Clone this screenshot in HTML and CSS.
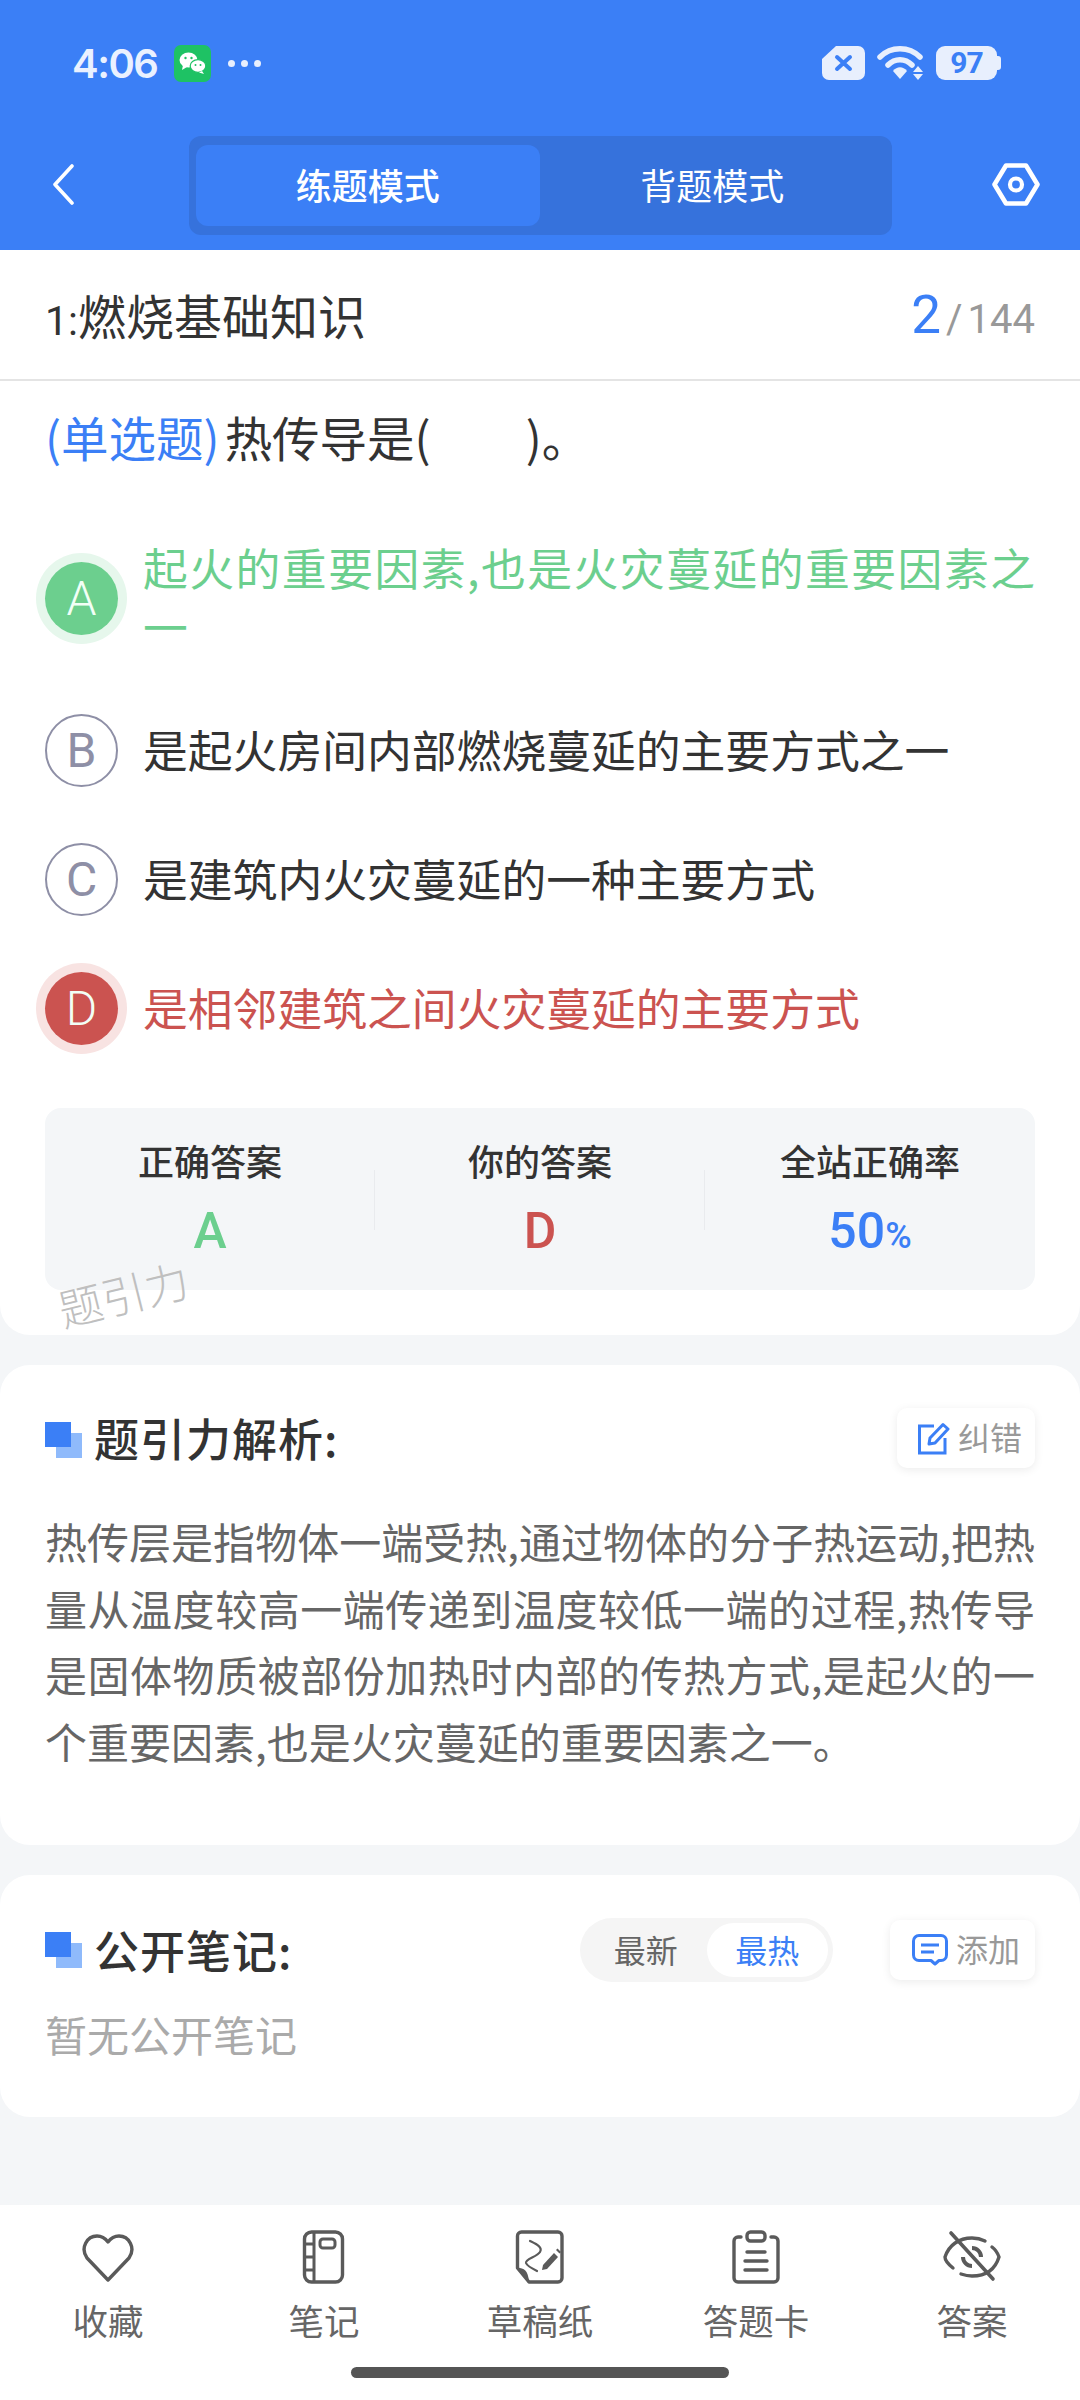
FILE: index.html
```html
<!DOCTYPE html>
<html lang="zh">
<head>
  <meta charset="utf-8">
  <title>题引力</title>
  <link rel="stylesheet" href="styles.css">
</head>
<body>
  <div class="page">
    <header class="header">
      <div class="status">
        <div class="status-left">
          <span class="time">4:06</span>
          <span class="wechat">
            <svg width="37" height="37" viewBox="0 0 37 37">
              <rect width="37" height="37" rx="7" fill="#1ec264"/>
              <ellipse cx="14.5" cy="15" rx="9" ry="7.6" fill="#fff"/>
              <path d="M9 20l-1 5 5-3z" fill="#fff"/>
              <ellipse cx="24" cy="21" rx="7.8" ry="6.4" fill="#fff" stroke="#1ec264" stroke-width="1.2"/>
              <path d="M28 26l2 3-5-1.500z" fill="#fff"/>
              <circle cx="11.500" cy="13" r="1.200" fill="#1ec264"/>
              <circle cx="17.500" cy="13" r="1.200" fill="#1ec264"/>
              <circle cx="21.500" cy="20" r="1" fill="#1ec264"/>
              <circle cx="26.500" cy="20" r="1" fill="#1ec264"/>
            </svg>
          </span>
          <span class="dots"><i></i><i></i><i></i></span>
        </div>
        <div class="status-right">
          <svg width="43" height="34" viewBox="0 0 43 34">
            <path d="M14 0H36a7 7 0 0 1 7 7V27a7 7 0 0 1-7 7H7a7 7 0 0 1-7-7V13z" fill="#e8effd"/>
            <path d="M15 11l13 12M28 11L15 23" stroke="#3b7ff6" stroke-width="4" stroke-linecap="round"/>
          </svg>
          <svg class="wifi" width="47" height="34" viewBox="0 0 47 34">
            <path d="M3 11C14 0 32 0 43 11" fill="none" stroke="#e8effd" stroke-width="5.500" stroke-linecap="round"/>
            <path d="M11 19C18 12 28 12 35 19" fill="none" stroke="#e8effd" stroke-width="5.500" stroke-linecap="round"/>
            <path d="M16 25C20 20 26 20 30 25L23 33z" fill="#e8effd"/>
            <path d="M41 20l5 6H36zM36 28h10l-5 6z" fill="#e8effd"/>
          </svg>
          <span class="battery">97</span>
        </div>
      </div>
      <div class="toolbar">
        <svg width="22" height="41" viewBox="0 0 22 41">
          <path d="M20 2L3 20.500 20 39" fill="none" stroke="#fff" stroke-width="3.600" stroke-linecap="round" stroke-linejoin="round"/>
        </svg>
        <div class="tabs">
          <span class="tab tab-active">练题模式</span>
          <span class="tab">背题模式</span>
        </div>
        <svg width="48" height="43" viewBox="0 0 48 43">
          <path d="M14 2.500H34L45.500 21.500 34 40.500H14L2.500 21.500z" fill="none" stroke="#fff" stroke-width="4.600" stroke-linejoin="round"/>
          <circle cx="24" cy="21.500" r="6" fill="none" stroke="#fff" stroke-width="4.200"/>
        </svg>
      </div>
    </header>

    <section class="card question-card">
      <div class="title-row">
        <span class="chapter"><span class="chapter-no">1:</span>燃烧基础知识</span>
        <span class="progress"><b>2</b><em>/</em>144</span>
      </div>
      <p class="question"><span class="qtype">(单选题)</span>热传导是(&emsp;&emsp;)。</p>

      <ul class="options">
        <li class="option right"><span class="letter">A</span><span class="option-text">起火的重要因素,也是火灾蔓延的重要因素之一</span></li>
        <li class="option"><span class="letter">B</span><span class="option-text">是起火房间内部燃烧蔓延的主要方式之一</span></li>
        <li class="option"><span class="letter">C</span><span class="option-text">是建筑内火灾蔓延的一种主要方式</span></li>
        <li class="option wrong"><span class="letter">D</span><span class="option-text">是相邻建筑之间火灾蔓延的主要方式</span></li>
      </ul>

      <div class="stats">
        <div class="stat"><span class="stat-label">正确答案</span><span class="stat-value green">A</span></div>
        <div class="stat"><span class="stat-label">你的答案</span><span class="stat-value red">D</span></div>
        <div class="stat"><span class="stat-label">全站正确率</span><span class="stat-value blue">50<small>%</small></span></div>
      </div>
      <span class="watermark">题引力</span>
    </section>

    <section class="card analysis-card">
      <div class="section-head">
        <span class="mark"></span>
        <h3>题引力解析:</h3>
        <span class="chip">
          <svg width="33" height="33" viewBox="0 0 33 33">
            <path d="M17 4H2.500V31H28V16" fill="none" stroke="#3b7ff6" stroke-width="3"/>
            <path d="M12 22l1-6L26 2.500l5 4.500L18 21z" fill="none" stroke="#3b7ff6" stroke-width="3" stroke-linejoin="round"/>
          </svg>
          <span class="chip-text">纠错</span>
        </span>
      </div>
      <p class="analysis">热传层是指物体一端受热,通过物体的分子热运动,把热量从温度较高一端传递到温度较低一端的过程,热传导是固体物质被部份加热时内部的传热方式,是起火的一个重要因素,也是火灾蔓延的重要因素之一。</p>
    </section>

    <section class="card notes-card">
      <div class="section-head">
        <span class="mark"></span>
        <h3>公开笔记:</h3>
        <span class="sort">
          <span class="sort-item">最新</span>
          <span class="sort-item sort-active">最热</span>
        </span>
        <span class="chip chip-add">
          <svg width="36" height="32" viewBox="0 0 36 32">
            <path d="M7 1.500H29a5.500 5.500 0 0 1 5.500 5.500V21a5.500 5.500 0 0 1-5.500 5.500H27L23 30 19 26.500H7A5.500 5.500 0 0 1 1.500 21V7A5.500 5.500 0 0 1 7 1.500z" fill="none" stroke="#3b7ff6" stroke-width="3" stroke-linejoin="round"/>
            <path d="M9 11H27M9 18H22" stroke="#3b7ff6" stroke-width="3"/>
          </svg>
          <span class="chip-text">添加</span>
        </span>
      </div>
      <p class="empty">暂无公开笔记</p>
    </section>

    <nav class="bottom">
      <div class="nav-items">
        <div class="nav-item">
          <svg width="54" height="54" viewBox="0 0 54 54">
            <path d="M27 50L6 28C-1 18 6 6 16 6C20.500 6 24 8 27 12C30 8 33.500 6 38 6C48 6 55 18 48 28z" fill="none" stroke="#5a5a5a" stroke-width="3.400" stroke-linejoin="round"/>
          </svg>
          <span>收藏</span>
        </div>
        <div class="nav-item">
          <svg width="54" height="54" viewBox="0 0 54 54">
            <rect x="7.500" y="2" width="38" height="50" rx="7" fill="none" stroke="#5a5a5a" stroke-width="3.400"/>
            <path d="M17 2V52M7.500 14H17M7.500 27H17M7.500 40H17" fill="none" stroke="#5a5a5a" stroke-width="3"/>
            <rect x="23" y="9" width="15" height="9" rx="3" fill="none" stroke="#5a5a5a" stroke-width="3"/>
          </svg>
          <span>笔记</span>
        </div>
        <div class="nav-item">
          <svg width="54" height="54" viewBox="0 0 54 54">
            <path d="M4.500 38V6a4 4 0 0 1 4-4H45a4 4 0 0 1 4 4V48a4 4 0 0 1-4 4H16z" fill="none" stroke="#5a5a5a" stroke-width="3.400" stroke-linejoin="round"/>
            <path d="M4.500 38C11 38 15 40 16 52z" fill="#5a5a5a"/>
            <path d="M17 11C23 14 30 17 27 22C24 27 12 29 13 33C14 36 20 39 24 41" fill="none" stroke="#5a5a5a" stroke-width="2.200" stroke-linecap="round"/>
            <path d="M29 40l1-5 11-12 4 4-11 12z" fill="#5a5a5a"/>
            <path d="M43 20l1.500-1.500 3.500 3.500-1.500 1.500z" fill="#5a5a5a"/>
          </svg>
          <span>草稿纸</span>
        </div>
        <div class="nav-item">
          <svg width="54" height="54" viewBox="0 0 54 54">
            <path d="M12 7H9a4 4 0 0 0-4 4V48a4 4 0 0 0 4 4H45a4 4 0 0 0 4-4V11a4 4 0 0 0-4-4H42" fill="none" stroke="#5a5a5a" stroke-width="3.400" stroke-linecap="round"/>
            <rect x="18" y="2" width="18" height="9" rx="3.500" fill="none" stroke="#5a5a5a" stroke-width="3.400"/>
            <path d="M18 22H36M16 31H38M16 40H38" stroke="#5a5a5a" stroke-width="3.400" stroke-linecap="round"/>
          </svg>
          <span>答题卡</span>
        </div>
        <div class="nav-item">
          <svg width="58" height="54" viewBox="0 0 58 54">
            <path d="M10 38C5 34 2 30 2 27C6 15 16 8 29 8C34 8 38 9 42 11M49 17C53 20 55 24 56 27C52 40 42 46 29 46C25 46 21 45 18 44" fill="none" stroke="#5a5a5a" stroke-width="3.400" stroke-linecap="round"/>
            <path d="M29 18a9 9 0 0 1 9 9M20 27a9 9 0 0 0 9 9" fill="none" stroke="#5a5a5a" stroke-width="4"/>
            <path d="M8 3L50 49" stroke="#5a5a5a" stroke-width="3.600" stroke-linecap="round"/>
          </svg>
          <span>答案</span>
        </div>
      </div>
      <div class="home-bar"></div>
    </nav>
  </div>
</body>
</html>
```

FILE: styles.css
```css
* {
    box-sizing: border-box;
}

html,
body {
    margin: 0;
    padding: 0;
}

body {
    width: 1080px;
    height: 2400px;
    background-color: #f4f6f8;
    font-family: "Noto Sans CJK SC", "Noto Sans", sans-serif;
    color: #333;
}

.page {
    display: flex;
    flex-direction: column;
    height: 2400px;
    overflow: hidden;
}

/* header */
.header {
    height: 250px;
    background-color: #3b7ff6;
}

.status {
    display: flex;
    justify-content: space-between;
    align-items: center;
    height: 126px;
    padding: 0 83px 0 72px;
}

.status-left,
.status-right {
    display: flex;
    align-items: center;
}

.time {
    width: 102px;
    font-family: Inter, sans-serif;
    font-size: 40px;
    font-weight: 600;
    letter-spacing: -1.500px;
    color: #eaf1ff;
}

.wechat {
    display: flex;
    height: 37px;
}

.dots {
    display: flex;
    gap: 6px;
    margin-left: 17px;
}

.dots i {
    width: 7px;
    height: 7px;
    border-radius: 50%;
    background-color: #e8effd;
}

.wifi {
    margin: 0 12px;
}

.battery {
    position: relative;
    width: 61px;
    height: 34px;
    border-radius: 9px;
    background-color: #e8effd;
    color: #3b7ff6;
    font-family: Roboto, sans-serif;
    font-size: 30px;
    font-weight: 700;
    letter-spacing: -1px;
    line-height: 34px;
    text-align: center;
}

.battery::after {
    content: "";
    position: absolute;
    right: -4px;
    top: 10px;
    width: 4px;
    height: 14px;
    border-radius: 0 3px 3px 0;
    background-color: #e8effd;
}

.toolbar {
    display: flex;
    justify-content: space-between;
    align-items: center;
    height: 104px;
    padding: 0 40px 8px 52px;
    margin-top: 10px;
}

.tabs {
    display: flex;
    width: 703px;
    height: 99px;
    padding: 9px 7px;
    margin-top: 3px;
    margin-left: 14px;
    border-radius: 12px;
    background-color: #3672dc;
}

.tab {
    width: 345px;
    border-radius: 12px;
    color: #fff;
    font-size: 36px;
    line-height: 79px;
    text-align: center;
}

.tab-active {
    background-color: #3b7ff6;
    font-weight: 500;
}

/* cards */
.card {
    position: relative;
    background-color: #fff;
}

.question-card {
    height: 1085px;
    border-radius: 0 0 30px 30px;
}

.analysis-card {
    height: 480px;
    margin-top: 30px;
    padding: 43px 45px 0;
    border-radius: 30px;
}

.notes-card {
    height: 242px;
    margin-top: 30px;
    padding: 45px 45px 0;
    border-radius: 30px;
}

.title-row {
    display: flex;
    justify-content: space-between;
    align-items: center;
    height: 131px;
    padding: 0 45px;
    border-bottom: 2px solid #e4e4e4;
}

.chapter {
    font-size: 48px;
    margin-top: -2px;
}

.chapter-no {
    font-family: Roboto, sans-serif;
    font-size: 41px;
}

.progress {
    display: flex;
    align-items: baseline;
    color: #999;
    font-family: Roboto, sans-serif;
    font-size: 40px;
}

.progress b {
    color: #3b7ff6;
    font-size: 53px;
    font-weight: 400;
}

.progress em {
    margin: 0 5px;
    font-style: normal;
}

.question {
    margin: 26px 45px 0;
    font-size: 47.500px;
    line-height: 59px;
}

.qtype {
    color: #3b7ff6;
    margin-right: 5px;
}

.options {
    display: flex;
    flex-direction: column;
    gap: 56px;
    margin: 73.500px 0 0;
    padding: 0 45px;
    list-style: none;
}

.option {
    display: flex;
    align-items: center;
    gap: 25px;
    min-height: 73px;
}

.letter {
    flex: none;
    width: 73px;
    height: 73px;
    border: 2px solid #8e8fa6;
    border-radius: 50%;
    color: #8e8fa6;
    font-family: Roboto, sans-serif;
    font-size: 48px;
    font-weight: 400;
    line-height: 69px;
    text-align: center;
}

.option-text {
    flex: 1;
    margin-bottom: 4px;
    font-size: 44.800px;
    line-height: 59px;
    text-align: justify;
}

.right .letter,
.wrong .letter {
    border: 0;
    color: #f2fff6;
    font-weight: 300;
    line-height: 73px;
}

.right .letter {
    background-color: #6ccf8e;
    box-shadow: 0 0 0 9px #e6f7ec;
}

.wrong .letter {
    background-color: #cb5350;
    box-shadow: 0 0 0 9px #f8e3e2;
}

.right .option-text {
    margin: -3px 0 3px;
    color: #6ccf8e;
}

.wrong .option-text {
    color: #cb5350;
}

.stats {
    display: flex;
    height: 182px;
    margin: 63px 45px 0;
    border-radius: 16px;
    background-color: #f4f6f8;
}

.stat {
    position: relative;
    display: flex;
    flex: 1;
    flex-direction: column;
    align-items: center;
    padding-top: 27px;
}

.stat + .stat::before {
    content: "";
    position: absolute;
    left: -1px;
    top: 62px;
    height: 60px;
    border-left: 1px solid #e9ebee;
}

.stat-label {
    font-size: 36px;
    font-weight: 500;
    line-height: 50px;
}

.stat-value {
    margin-top: 19px;
    font-family: Roboto, sans-serif;
    font-size: 50px;
    font-weight: 500;
    line-height: 54px;
}

.stat-value small {
    font-size: 36px;
}

.green {
    color: #6ccf8e;
}

.red {
    color: #cb5350;
}

.blue {
    color: #3b7ff6;
}

.watermark {
    position: absolute;
    left: 57px;
    top: 1011px;
    color: #bfbfbf;
    font-size: 44px;
    font-weight: 300;
    transform: rotate(-14deg);
}

.section-head {
    display: flex;
    align-items: center;
    height: 60px;
}

.section-head h3 {
    flex: 1;
    margin: 0 0 0 12px;
    font-size: 45px;
    font-weight: 500;
    letter-spacing: 1px;
    line-height: 60px;
}

.mark {
    position: relative;
    flex: none;
    width: 37px;
    height: 36px;
    background: linear-gradient(#8fbafb, #8fbafb) 11px 11px / 26px 25px no-repeat;
}

.analysis-card .mark {
    margin-top: 4px;
}

.mark::before {
    content: "";
    position: absolute;
    left: 0;
    top: 0;
    width: 26px;
    height: 25px;
    background-color: #3b7ff6;
}

.chip {
    display: flex;
    align-items: center;
    gap: 8px;
    width: 138px;
    height: 60px;
    padding-left: 20px;
    border-radius: 10px;
    background-color: #fff;
    box-shadow: 0 2px 10px rgba(0, 0, 0, 0.08);
    color: #999;
    font-size: 32px;
    white-space: nowrap;
}

.chip-text {
    margin-top: -4px;
}

.chip-add {
    width: 145px;
    margin-left: 57px;
    padding-left: 22px;
}

.analysis {
    margin: 40px 0 0;
    color: #666;
    font-size: 42px;
    line-height: 66.500px;
    text-align: justify;
}

.sort {
    display: flex;
    align-items: center;
    width: 253px;
    height: 64px;
    padding: 0 5px;
    border-radius: 32px;
    background-color: #f5f5f5;
    font-size: 32px;
}

.sort-item {
    width: 122px;
    height: 54px;
    color: #666;
    line-height: 52px;
    text-align: center;
}

.sort-active {
    border-radius: 27px;
    background-color: #fff;
    color: #3b7ff6;
}

.empty {
    margin: 24px 0 0;
    color: #aaa;
    font-size: 42px;
    line-height: 60px;
}

/* bottom bar */
.bottom {
    display: flex;
    flex-direction: column;
    height: 195px;
    margin-top: 88px;
    background-color: #fff;
}

.nav-items {
    display: flex;
    padding-top: 25px;
}

.nav-item {
    display: flex;
    flex: 1;
    flex-direction: column;
    align-items: center;
    color: #666;
    font-size: 35.500px;
    line-height: 50px;
}

.nav-item span {
    margin-top: 11px;
}

.home-bar {
    width: 378px;
    height: 11px;
    margin: 22px auto 0;
    border-radius: 6px;
    background-color: #555;
}
```
